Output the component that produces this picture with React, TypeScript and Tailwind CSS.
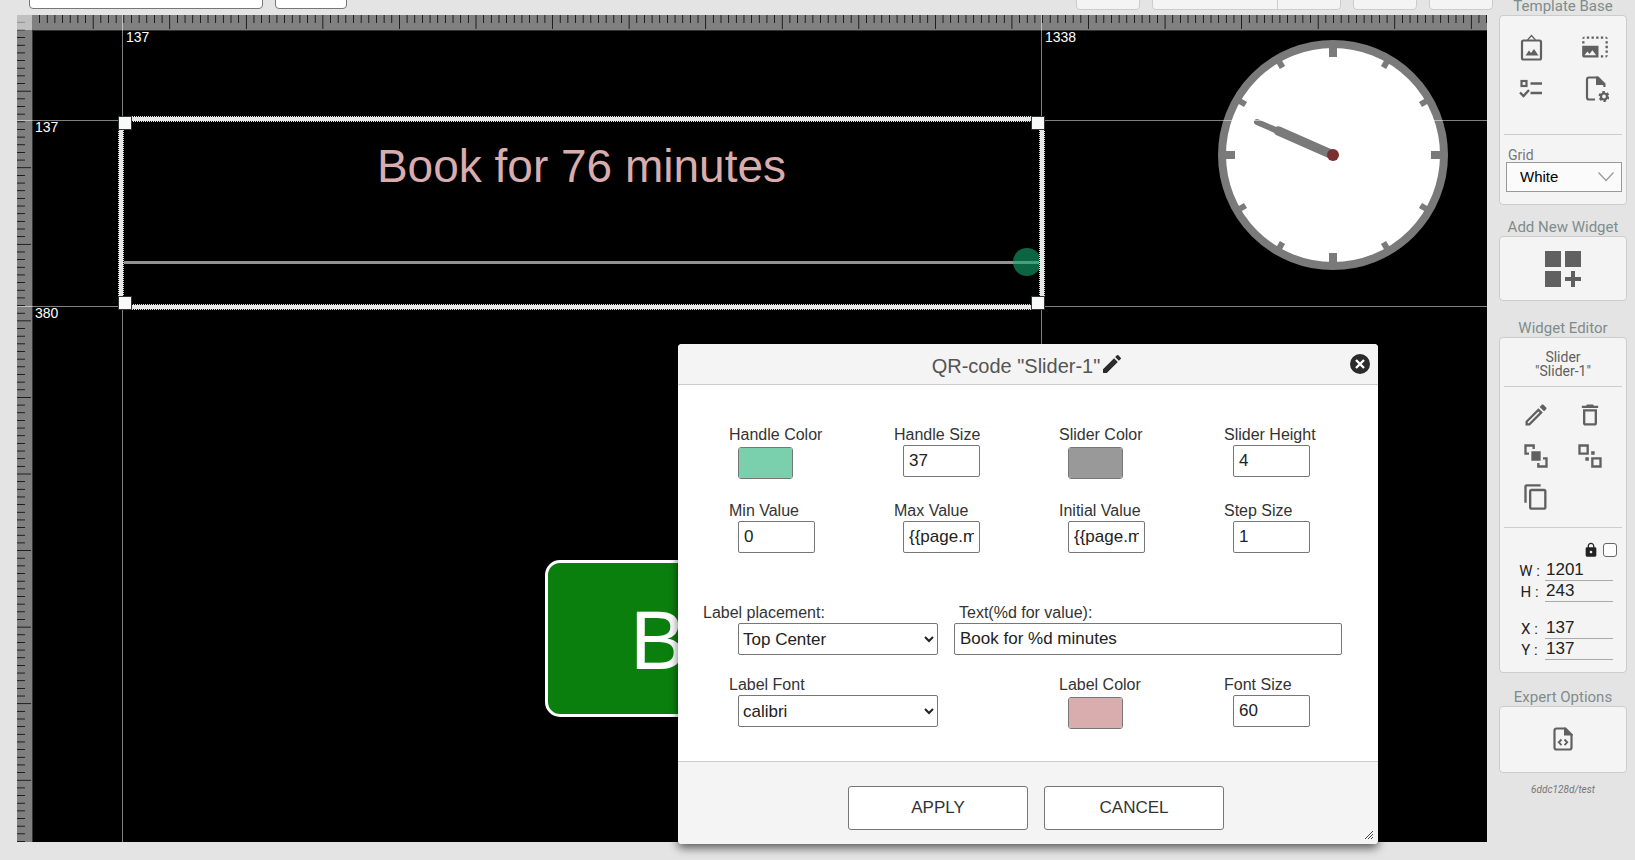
import { useState } from "react";
import type { ReactNode } from "react";
import {
  MdContentCopy,
  MdDashboardCustomize,
  MdDeleteOutline,
  MdEdit,
  MdLock,
  MdOutlineEdit,
  MdPhotoSizeSelectLarge,
} from "react-icons/md";

const SCALE = 0.765625;

function Ruler({ axis }: { axis: "x" | "y" }) {
  const horizontal = axis === "x";
  const count = horizontal ? 192 : 108;
  const step = 10 * SCALE;
  return (
    <svg
      aria-hidden="true"
      className={
        horizontal
          ? "absolute left-0 top-0 h-4 w-full bg-[#808080]"
          : "absolute left-0 top-0 h-full w-4 bg-[#808080]"
      }
    >
      {Array.from({ length: count }, (_, i) => {
        const end = (i + 1) * step;
        const size = (i + 1) % 10 === 0 ? 14 : 8;
        return horizontal ? (
          <rect key={i} x={end - SCALE} y={0} width={SCALE} height={size} />
        ) : (
          <rect key={i} x={0} y={end - SCALE} width={size} height={SCALE} />
        );
      })}
      {horizontal ? (
        <rect x={0} y={15} width="100%" height={1} fill="#333" />
      ) : (
        <rect x={15} y={15} width={1} height="100%" fill="#333" />
      )}
    </svg>
  );
}

function Clock() {
  return (
    <svg viewBox="-115 -115 230 230" className="absolute left-[1201px] top-[25px] size-[230px]" aria-label="Clock">
      <circle r="111" fill="#fff" stroke="#7a7a7a" strokeWidth="8" />
      {Array.from({ length: 12 }, (_, i) =>
        i % 3 === 0 ? (
          <rect key={i} x="-4" y="-110" width="8" height="12" fill="#7a7a7a" transform={`rotate(${i * 30})`} />
        ) : (
          <rect key={i} x="-3" y="-110" width="6" height="9" fill="#7a7a7a" transform={`rotate(${i * 30})`} />
        ),
      )}
      <g stroke="#7a7a7a" strokeLinecap="round">
        <line x1="0" y1="0" x2="-76" y2="-33" strokeWidth="6" />
        <line x1="0" y1="0" x2="-54.500" y2="-24" strokeWidth="9.500" />
      </g>
      <circle r="6" fill="#7a3033" />
    </svg>
  );
}

const guideLabel = "absolute text-sm leading-4 text-white";
const grip = "absolute size-3 bg-[#f8faf9] outline outline-[#333]";

function Canvas() {
  const [value, setValue] = useState(76);
  return (
    <main className="relative mb-[18px] ml-[17px] min-w-0 flex-1 overflow-hidden bg-black">
      <Ruler axis="x" />
      <Ruler axis="y" />
      <div className="absolute left-0 top-0 size-[15px] bg-white/50" />

      <div className="absolute left-[528px] top-[545px] flex h-[157px] w-[392px] items-center rounded-[15px] border-3 border-white bg-[#0b7f0e] pl-[82px] pt-0.5 text-[84px] leading-none text-white">
        B
      </div>

      <Clock />

      <div className="absolute left-[105px] top-0 h-full w-px bg-white/50" />
      <div className="absolute left-[1024px] top-0 h-full w-px bg-white/50" />
      <div className="absolute left-0 top-[105px] h-px w-full bg-white/50" />
      <div className="absolute left-0 top-[291px] h-px w-full bg-white/50" />
      <span className={`${guideLabel} left-[109px] top-[14px]`}>137</span>
      <span className={`${guideLabel} left-[1028px] top-[14px]`}>1338</span>
      <span className={`${guideLabel} left-[18px] top-[104px]`}>137</span>
      <span className={`${guideLabel} left-[18px] top-[290px]`}>380</span>

      <div className="absolute left-[101px] top-[101px] h-[194px] w-[927px] border border-dotted border-[#ddd]">
        <div className="h-full border-4 border-[#e8e8e8]">
          <div className="flex h-full flex-col overflow-hidden border border-dotted border-[#ddd] pt-[18px]">
            <label htmlFor="preview" className="text-center text-[46px] leading-[52px] text-[#d9acad]">
              Book for {value} minutes
            </label>
            <input
              id="preview"
              type="range"
              min={0}
              max={76}
              value={value}
              onChange={(e) => setValue(Number(e.target.value))}
              className="-mr-0.5 mt-[56px] h-7 shrink-0 appearance-none bg-transparent [&::-webkit-slider-runnable-track]:h-[3px] [&::-webkit-slider-runnable-track]:bg-[#929292] [&::-webkit-slider-thumb]:-mt-[13px] [&::-webkit-slider-thumb]:size-7 [&::-webkit-slider-thumb]:appearance-none [&::-webkit-slider-thumb]:rounded-full [&::-webkit-slider-thumb]:bg-[#14a86e]/60"
            />
          </div>
        </div>
        <div className={`${grip} left-0 top-0`} />
        <div className={`${grip} right-0 top-0`} />
        <div className={`${grip} bottom-0 left-0`} />
        <div className={`${grip} bottom-0 right-0`} />
      </div>
    </main>
  );
}

function Toolbar() {
  const box = "h-6 shrink-0 rounded border";
  return (
    <header className="flex h-[15px] items-end overflow-hidden pb-[5px]">
      <input aria-label="Name" className={`${box} mb-px ml-[29px] w-[234px] border-[#777] bg-white`} />
      <input aria-label="Zoom" className={`${box} mb-px ml-3 w-[72px] border-[#777] bg-white`} />
      <div className="flex-1" />
      <div className="mr-[142px] flex gap-3">
        <button type="button" aria-label="Undo" className={`${box} w-16 border-[#ccc] bg-[#f4f4f4]`} />
        <div className={`${box} flex w-[189px] border-[#ccc] bg-[#f4f4f4]`}>
          <button type="button" aria-label="Preview" className="w-[125px] border-r border-[#ccc]" />
          <button type="button" aria-label="Export" className="flex-1" />
        </div>
        <button type="button" aria-label="Save" className={`${box} w-16 border-[#ccc] bg-[#f4f4f4]`} />
        <button type="button" aria-label="Exit" className={`${box} w-16 border-[#ccc] bg-[#f4f4f4]`} />
      </div>
    </header>
  );
}

function Heading({ children }: { children: ReactNode }) {
  return (
    <h2 className="text-center font-[Roboto] text-[15px] leading-[18px] whitespace-nowrap text-[#7f8c8c]">{children}</h2>
  );
}

const panel = "rounded border border-[#ccc] bg-[#f4f4f4] px-1";

function IconButton({ label, children }: { label: string; children: ReactNode }) {
  return (
    <button type="button" aria-label={label} className="flex size-7 items-center justify-center text-[#606060]">
      {children}
    </button>
  );
}

function PictureFrameIcon() {
  return (
    <svg viewBox="0 0 28 28" className="size-7" fill="none" stroke="currentColor">
      <rect x="5" y="7.500" width="19" height="19" rx="1.500" strokeWidth="2.200" />
      <path d="M10.500 7 14.500 2.500l4 4.500" strokeWidth="1.200" />
      <path d="M8.500 22.500l3.500-5 2 2.500 3-4L21.500 22.500z" fill="currentColor" stroke="none" />
    </svg>
  );
}

function ChecklistIcon() {
  return (
    <svg viewBox="0 0 28 28" className="size-7" fill="none" stroke="currentColor">
      <rect x="4.500" y="6" width="5" height="5" strokeWidth="2.200" />
      <path d="M13.500 8.500H25M13.500 18H25" strokeWidth="2.400" />
      <path d="M3 17.500l3.500 3.500L12 15" strokeWidth="2.400" />
    </svg>
  );
}

function FileGearIcon() {
  return (
    <svg viewBox="0 0 28 28" className="size-7" fill="none" stroke="currentColor">
      <path d="M14 24.500H8A2 2 0 0 1 6 22.500V4.500A2 2 0 0 1 8 2.500H16.500" strokeWidth="2.200" />
      <path d="M15 1.400H17.500l7 7V12h-2.200v-2H15z" fill="currentColor" stroke="none" />
      <circle cx="23" cy="21.500" r="3" strokeWidth="2.200" />
      <circle cx="23" cy="21.500" r="4.500" strokeWidth="1.900" strokeDasharray="2.700 2.012" />
    </svg>
  );
}

function FileCodeIcon() {
  return (
    <svg viewBox="0 0 28 28" className="size-7" fill="none" stroke="currentColor">
      <path d="M16 2.500H7.500A2 2 0 0 0 5.500 4.500v17a2 2 0 0 0 2 2h13a2 2 0 0 0 2-2V8" strokeWidth="2.200" />
      <path d="M15 1.400h2l6.600 6.800V9.500H15z" fill="currentColor" stroke="none" />
      <path d="M12.500 13.500 9.800 16.300l2.700 2.800M15.500 13.500l2.700 2.800-2.700 2.800" strokeWidth="1.900" />
    </svg>
  );
}

function BringFrontIcon() {
  return (
    <svg viewBox="0 0 24 24" className="size-7" fill="currentColor">
      <path d="M2 2h9v4H9V4H4v5h2v2H2zM22 13v9h-9v-4h2v2h5v-5h-2v-2zM8 8v8h8V8z" />
    </svg>
  );
}

function SendBackIcon() {
  return (
    <svg viewBox="0 0 24 24" className="size-7" fill="currentColor" fillRule="evenodd">
      <path d="M2 2h9v9H2zM9 4H4v5h5zM22 13v9h-9v-9zM15 20h5v-5h-5zM16 8v3h-3V8zM11 16H8v-3h3z" />
    </svg>
  );
}

function Measure({ name, value }: { name: string; value: string }) {
  const id = `measure-${name}`;
  return (
    <div className="flex h-[21px] items-end pl-[14px]">
      <label htmlFor={id} className="w-[27px] pr-1 text-center font-[Roboto] text-[15px] leading-5 whitespace-nowrap text-[#222]">
        {name} :
      </label>
      <input
        id={id}
        defaultValue={value}
        className="h-[21px] w-[68px] border-b border-[#aaa] pl-px text-[17px] text-[#222]"
      />
    </div>
  );
}

function Sidebar() {
  return (
    <aside className="-mt-[15px] w-[148px] shrink-0 pb-4 pl-3 pr-2">
      <div className="flex h-[15px] flex-col justify-end">
        <Heading>Template Base</Heading>
      </div>
      <section className={`${panel} h-[190px]`}>
        <div className="flex justify-between px-[13px] pt-[17px]">
          <IconButton label="Background image"><PictureFrameIcon /></IconButton>
          <IconButton label="Image size"><MdPhotoSizeSelectLarge className="size-7" /></IconButton>
        </div>
        <div className="flex justify-between px-[13px] pt-[14px]">
          <IconButton label="Options"><ChecklistIcon /></IconButton>
          <IconButton label="Page settings"><FileGearIcon /></IconButton>
        </div>
        <hr className="mt-[31px] border-[#ccc]" />
        <label htmlFor="grid" className="mt-3 block h-[15px] pl-1 font-[Roboto] text-sm leading-4 text-[#777]">
          Grid
        </label>
        <div className="relative ml-0.5">
          <select
            id="grid"
            defaultValue="White"
            className="h-[30px] w-full appearance-none border border-[#999] bg-[#fbfbfb] pl-[13px] text-[15px] text-black"
          >
            <option>White</option>
          </select>
          <svg viewBox="0 0 16 10" className="pointer-events-none absolute right-2 top-[10px] h-[10px] w-4" fill="none" stroke="#999">
            <path d="M.5.5 8 8.500 15.500.5" strokeWidth="1.200" />
          </svg>
        </div>
      </section>

      <div className="mt-[13px]">
        <Heading>Add New Widget</Heading>
      </div>
      <section className={`${panel} flex h-[65px] items-center justify-center`}>
        <button type="button" aria-label="Add widget" className="text-[#606060]">
          <MdDashboardCustomize className="size-12" />
        </button>
      </section>

      <div className="mt-[18px]">
        <Heading>Widget Editor</Heading>
      </div>
      <section className={`${panel} h-[336px]`}>
        <p className="pt-3 text-center font-[Roboto] text-sm leading-[14px] text-[#606060]">
          Slider
          <br />
          "Slider-1"
        </p>
        <hr className="mt-2 border-[#ccc]" />
        <div className="grid grid-cols-[28px_28px] gap-x-[26px] gap-y-[13px] pl-[18px] pt-[14px]">
          <IconButton label="Edit"><MdOutlineEdit className="size-7" /></IconButton>
          <IconButton label="Delete"><MdDeleteOutline className="size-7" /></IconButton>
          <IconButton label="Bring to front"><BringFrontIcon /></IconButton>
          <IconButton label="Send to back"><SendBackIcon /></IconButton>
          <IconButton label="Copy"><MdContentCopy className="size-7" /></IconButton>
        </div>
        <hr className="mt-4 border-[#ccc]" />
        <div className="flex items-center justify-end gap-1 pr-[5px] pt-[14px]">
          <label htmlFor="lock" aria-label="Lock size">
            <MdLock className="size-4 text-[#222]" />
          </label>
          <input id="lock" type="checkbox" className="size-[14px] appearance-none rounded-[3px] border border-[#666] bg-white" />
        </div>
        <div className="pt-0.5">
          <Measure name="W" value="1201" />
          <Measure name="H" value="243" />
        </div>
        <div className="pt-4">
          <Measure name="X" value="137" />
          <Measure name="Y" value="137" />
        </div>
      </section>

      <div className="mt-[15px]">
        <Heading>Expert Options</Heading>
      </div>
      <section className={`${panel} flex h-[67px] items-center justify-center`}>
        <IconButton label="Edit source"><FileCodeIcon /></IconButton>
      </section>
      <p className="mt-[9px] text-center font-[Roboto] text-[10px] leading-4 text-[#777] italic">6ddc128d/test</p>
    </aside>
  );
}

const control = "h-8 rounded-[2px] border border-[#777] bg-white text-[17px] text-[#222]";

function Field({ id, label, children }: { id: string; label: string; children: ReactNode }) {
  return (
    <div className="flex flex-col items-start">
      <label htmlFor={id} className="h-5 text-base leading-5 whitespace-nowrap">
        {label}
      </label>
      {children}
    </div>
  );
}

function TextField({ id, label, value }: { id: string; label: string; value: string }) {
  return (
    <Field id={id} label={label}>
      <input id={id} defaultValue={value} className={`${control} ml-[9px] w-[77px] px-[5px]`} />
    </Field>
  );
}

function ColorField({ id, label, value }: { id: string; label: string; value: string }) {
  return (
    <Field id={id} label={label}>
      <input
        id={id}
        type="color"
        defaultValue={value}
        className="ml-[9px] mt-0.5 h-8 w-[55px] appearance-none overflow-hidden rounded-[3px] border border-[#777] p-0 [&::-webkit-color-swatch-wrapper]:p-0 [&::-webkit-color-swatch]:border-0"
      />
    </Field>
  );
}

const row = "grid grid-cols-[165px_165px_165px_1fr] pl-[51px] h-[52px]";

function Dialog() {
  return (
    <form
      onSubmit={(e) => e.preventDefault()}
      className="absolute left-[678px] top-[344px] w-[700px] overflow-hidden rounded-[4px] bg-white text-[#333] shadow-[0_4px_10px_rgba(0,0,0,0.6)]"
    >
      <div className="relative flex h-[41px] items-center justify-center border-b border-[#ccc] bg-[#f4f4f4] pt-1 text-xl text-[#555]">
        <span>QR-code "Slider-1"</span>
        <button type="button" aria-label="Rename" className="-mt-1 text-[#2b2b2b]">
          <MdEdit className="size-6" />
        </button>
        <button type="button" aria-label="Close" className="absolute right-2 top-[10px]">
          <svg viewBox="0 0 20 20" className="size-5">
            <circle cx="10" cy="10" r="10" fill="#2b2b2b" />
            <path d="M6 6l8 8M14 6l-8 8" stroke="#fff" strokeWidth="2.400" />
          </svg>
        </button>
      </div>

      <div className="pb-[34px] pt-10">
        <div className={row}>
          <ColorField id="handle-color" label="Handle Color" value="#7ad0ad" />
          <TextField id="handle-size" label="Handle Size" value="37" />
          <ColorField id="slider-color" label="Slider Color" value="#999999" />
          <TextField id="slider-height" label="Slider Height" value="4" />
        </div>
        <div className={`${row} mt-6`}>
          <TextField id="min-value" label="Min Value" value="0" />
          <TextField id="max-value" label="Max Value" value="{{page.minutes}}" />
          <TextField id="initial-value" label="Initial Value" value="{{page.minutes}}" />
          <TextField id="step-size" label="Step Size" value="1" />
        </div>
        <div className="mt-[50px] flex gap-4 pl-[25px] pr-9">
          <Field id="placement" label="Label placement:">
            <select id="placement" defaultValue="Top Center" className={`${control} ml-[35px] w-[200px]`}>
              <option>Top Center</option>
            </select>
          </Field>
          <div className="flex flex-1 flex-col">
            <label htmlFor="text" className="ml-[5px] h-5 text-base leading-5">
              Text(%d for value):
            </label>
            <input id="text" defaultValue="Book for %d minutes" className={`${control} w-full px-[5px]`} />
          </div>
        </div>
        <div className={`${row} mt-5`}>
          <div className="col-span-2">
            <Field id="font" label="Label Font">
              <select id="font" defaultValue="calibri" className={`${control} ml-[9px] w-[200px]`}>
                <option>calibri</option>
              </select>
            </Field>
          </div>
          <ColorField id="label-color" label="Label Color" value="#d9acad" />
          <TextField id="font-size" label="Font Size" value="60" />
        </div>
      </div>

      <div className="relative flex h-[83px] justify-center gap-4 border-t border-[#ccc] bg-[#f4f4f4] pl-4 pt-6">
        <button type="submit" className="h-11 w-[180px] rounded-[3px] border border-[#777] bg-white text-[17px]">
          APPLY
        </button>
        <button type="button" className="h-11 w-[180px] rounded-[3px] border border-[#777] bg-white text-[17px]">
          CANCEL
        </button>
        <svg viewBox="0 0 8 8" className="absolute bottom-[5px] right-[5px] size-2" stroke="#333" strokeWidth=".9">
          <path d="M0 8 8 0M3 8l5-5M6 8l2-2" />
        </svg>
      </div>
    </form>
  );
}

export default function App() {
  return (
    <div className="relative flex h-screen min-h-[800px] flex-col overflow-hidden bg-[#e4e4e4] font-['Liberation_Sans',Arial,sans-serif]">
      <Toolbar />
      <div className="flex min-h-0 flex-1">
        <Canvas />
        <Sidebar />
      </div>
      <Dialog />
    </div>
  );
}
